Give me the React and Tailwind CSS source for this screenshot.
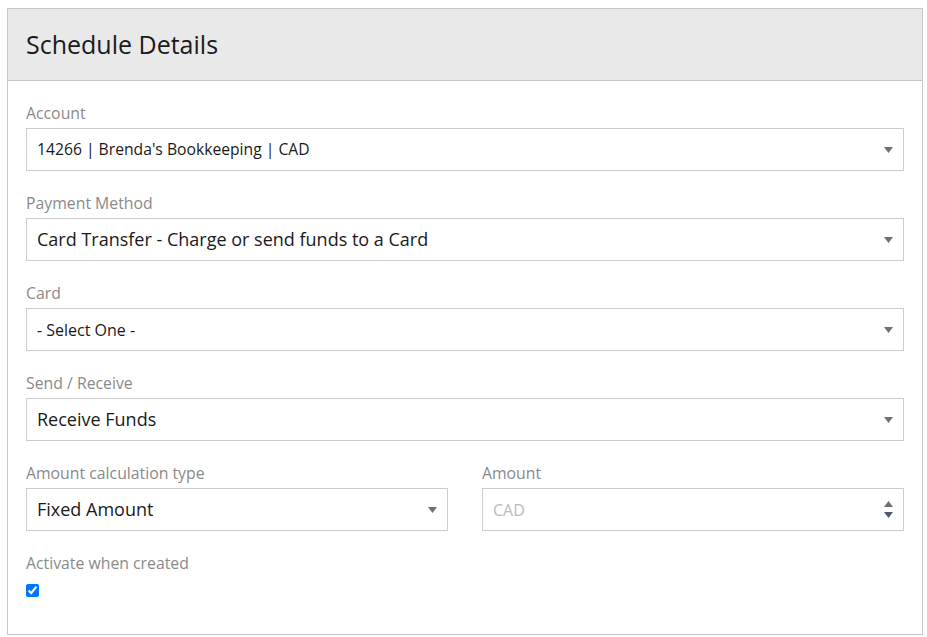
const FONT = { fontFamily: '"Open Sans", "Noto Sans", sans-serif' }

function Caret() {
  return (
    <svg width="9" height="6" viewBox="0 0 9 6" aria-hidden="true">
      <path d="M0 0 H9 L4.5 6 Z" fill="#707070" />
    </svg>
  )
}

function Spinner() {
  return (
    <div className="flex flex-col gap-[5px]">
      <svg width="9" height="6" viewBox="0 0 9 6" aria-hidden="true">
        <path d="M0 6 H9 L4.5 0 Z" fill="#707070" />
      </svg>
      <svg width="9" height="6" viewBox="0 0 9 6" aria-hidden="true">
        <path d="M0 0 H9 L4.5 6 Z" fill="#505a68" />
      </svg>
    </div>
  )
}

function Field({ label, value, size = 'text-[18px]', placeholder, spinner }) {
  return (
    <div className="flex flex-col">
      <label className="text-[15.8px] leading-6 text-[#8a8a8a]">{label}</label>
      <div className="mt-[3px] h-[43px] border border-[#cccccc] bg-white flex items-center justify-between pl-[10px] pr-[10px]">
        <span className={`${size} ${placeholder ? 'text-[#bbbbbb]' : 'text-[#1a1a1a]'}`}>{value}</span>
        {spinner ? <Spinner /> : <Caret />}
      </div>
    </div>
  )
}

export default function App() {
  return (
    <div className="min-h-screen bg-white pt-[8px] pl-[7px]" style={FONT}>
      <div className="w-[916px] border border-[#c8c8c8]">
        <div className="h-[72px] bg-[#e9e9e9] border-b border-[#c8c8c8] flex items-center pl-[18px]">
          <h1 className="text-[25px] text-[#1a1a1a]">Schedule Details</h1>
        </div>
        <div className="px-[18px] pt-[20px] pb-[37px] flex flex-col gap-[20px]">
          <Field label="Account" value="14266 | Brenda's Bookkeeping | CAD" size="text-[15.7px]" />
          <Field label="Payment Method" value="Card Transfer - Charge or send funds to a Card" />
          <Field label="Card" value="- Select One -" size="text-[16px]" />
          <Field label="Send / Receive" value="Receive Funds" />
          <div className="grid grid-cols-2 gap-[34px]">
            <Field label="Amount calculation type" value="Fixed Amount" />
            <Field label="Amount" value="CAD" size="text-[16px]" placeholder spinner />
          </div>
          <div className="flex flex-col">
            <label className="text-[15.8px] leading-6 text-[#8a8a8a]">Activate when created</label>
            <input type="checkbox" defaultChecked className="mt-[9px] w-[13px] h-[13px]" />
          </div>
        </div>
      </div>
    </div>
  )
}
